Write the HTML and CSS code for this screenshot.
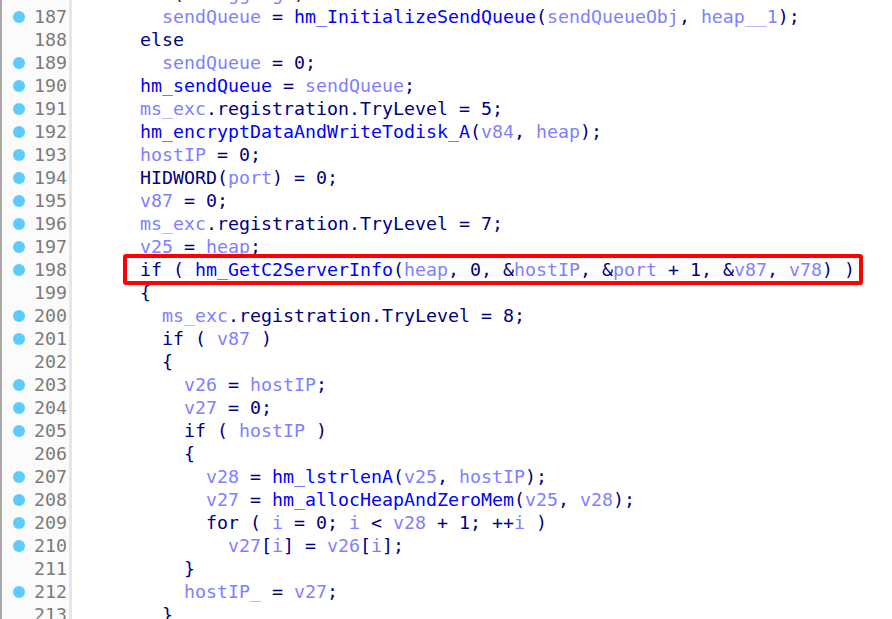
FILE: index.html
```html
<!DOCTYPE html>
<html>
<head>
<meta charset="utf-8">
<link rel="stylesheet" href="styles.css">
</head>
<body>
<div class="listing">
  <div class="row"><div class="gutter"><span class="dot"></span><span class="num">186</span></div><div class="code">      <span class="k">if</span> <span class="k">(</span> <span class="v">bLogging</span> <span class="k">)</span></div></div>
  <div class="row"><div class="gutter"><span class="dot"></span><span class="num">187</span></div><div class="code">        <span class="v">sendQueue</span> <span class="k">=</span> <span class="f">hm_InitializeSendQueue</span><span class="k">(</span><span class="v">sendQueueObj</span><span class="k">,</span> <span class="v">heap__1</span><span class="k">);</span></div></div>
  <div class="row"><div class="gutter"><span class="nodot"></span><span class="num">188</span></div><div class="code">      <span class="k">else</span></div></div>
  <div class="row"><div class="gutter"><span class="dot"></span><span class="num">189</span></div><div class="code">        <span class="v">sendQueue</span> <span class="k">= 0;</span></div></div>
  <div class="row"><div class="gutter"><span class="dot"></span><span class="num">190</span></div><div class="code">      <span class="f">hm_sendQueue</span> <span class="k">=</span> <span class="v">sendQueue</span><span class="k">;</span></div></div>
  <div class="row"><div class="gutter"><span class="dot"></span><span class="num">191</span></div><div class="code">      <span class="v">ms_exc</span><span class="k">.registration.TryLevel = 5;</span></div></div>
  <div class="row"><div class="gutter"><span class="dot"></span><span class="num">192</span></div><div class="code">      <span class="f">hm_encryptDataAndWriteTodisk_A</span><span class="k">(</span><span class="v">v84</span><span class="k">,</span> <span class="v">heap</span><span class="k">);</span></div></div>
  <div class="row"><div class="gutter"><span class="dot"></span><span class="num">193</span></div><div class="code">      <span class="v">hostIP</span> <span class="k">= 0;</span></div></div>
  <div class="row"><div class="gutter"><span class="dot"></span><span class="num">194</span></div><div class="code">      <span class="k">HIDWORD(</span><span class="v">port</span><span class="k">) = 0;</span></div></div>
  <div class="row"><div class="gutter"><span class="dot"></span><span class="num">195</span></div><div class="code">      <span class="v">v87</span> <span class="k">= 0;</span></div></div>
  <div class="row"><div class="gutter"><span class="dot"></span><span class="num">196</span></div><div class="code">      <span class="v">ms_exc</span><span class="k">.registration.TryLevel = 7;</span></div></div>
  <div class="row"><div class="gutter"><span class="dot"></span><span class="num">197</span></div><div class="code">      <span class="v">v25</span> <span class="k">=</span> <span class="v">heap</span><span class="k">;</span></div></div>
  <div class="row"><div class="gutter"><span class="dot"></span><span class="num">198</span></div><div class="code">      <span class="mark"><span class="k">if</span> <span class="k">(</span> <span class="f">hm_GetC2ServerInfo</span><span class="k">(</span><span class="v">heap</span><span class="k">, 0, &amp;</span><span class="v">hostIP</span><span class="k">, &amp;</span><span class="v">port</span><span class="k"> + 1, &amp;</span><span class="v">v87</span><span class="k">,</span> <span class="v">v78</span><span class="k">) )</span></span></div></div>
  <div class="row"><div class="gutter"><span class="nodot"></span><span class="num">199</span></div><div class="code">      <span class="k">{</span></div></div>
  <div class="row"><div class="gutter"><span class="dot"></span><span class="num">200</span></div><div class="code">        <span class="v">ms_exc</span><span class="k">.registration.TryLevel = 8;</span></div></div>
  <div class="row"><div class="gutter"><span class="dot"></span><span class="num">201</span></div><div class="code">        <span class="k">if</span> <span class="k">(</span> <span class="v">v87</span> <span class="k">)</span></div></div>
  <div class="row"><div class="gutter"><span class="nodot"></span><span class="num">202</span></div><div class="code">        <span class="k">{</span></div></div>
  <div class="row"><div class="gutter"><span class="dot"></span><span class="num">203</span></div><div class="code">          <span class="v">v26</span> <span class="k">=</span> <span class="v">hostIP</span><span class="k">;</span></div></div>
  <div class="row"><div class="gutter"><span class="dot"></span><span class="num">204</span></div><div class="code">          <span class="v">v27</span> <span class="k">= 0;</span></div></div>
  <div class="row"><div class="gutter"><span class="dot"></span><span class="num">205</span></div><div class="code">          <span class="k">if</span> <span class="k">(</span> <span class="v">hostIP</span> <span class="k">)</span></div></div>
  <div class="row"><div class="gutter"><span class="nodot"></span><span class="num">206</span></div><div class="code">          <span class="k">{</span></div></div>
  <div class="row"><div class="gutter"><span class="dot"></span><span class="num">207</span></div><div class="code">            <span class="v">v28</span> <span class="k">=</span> <span class="f">hm_lstrlenA</span><span class="k">(</span><span class="v">v25</span><span class="k">,</span> <span class="v">hostIP</span><span class="k">);</span></div></div>
  <div class="row"><div class="gutter"><span class="dot"></span><span class="num">208</span></div><div class="code">            <span class="v">v27</span> <span class="k">=</span> <span class="f">hm_allocHeapAndZeroMem</span><span class="k">(</span><span class="v">v25</span><span class="k">,</span> <span class="v">v28</span><span class="k">);</span></div></div>
  <div class="row"><div class="gutter"><span class="dot"></span><span class="num">209</span></div><div class="code">            <span class="k">for</span> <span class="k">(</span> <span class="v">i</span> <span class="k">= 0;</span> <span class="v">i</span> <span class="k">&lt;</span> <span class="v">v28</span> <span class="k">+ 1; ++</span><span class="v">i</span> <span class="k">)</span></div></div>
  <div class="row"><div class="gutter"><span class="dot"></span><span class="num">210</span></div><div class="code">              <span class="v">v27</span><span class="k">[</span><span class="v">i</span><span class="k">] =</span> <span class="v">v26</span><span class="k">[</span><span class="v">i</span><span class="k">];</span></div></div>
  <div class="row"><div class="gutter"><span class="nodot"></span><span class="num">211</span></div><div class="code">          <span class="k">}</span></div></div>
  <div class="row"><div class="gutter"><span class="dot"></span><span class="num">212</span></div><div class="code">          <span class="v">hostIP_</span> <span class="k">=</span> <span class="v">v27</span><span class="k">;</span></div></div>
  <div class="row"><div class="gutter"><span class="nodot"></span><span class="num">213</span></div><div class="code">        <span class="k">}</span></div></div>
</div>
</body>
</html>
```

FILE: styles.css
```css
html, body {
  margin: 0;
  padding: 0;
  background: #ffffff;
  width: 892px;
  height: 619px;
  overflow: hidden;
}

.listing {
  margin-top: -18px;
  font-family: "DejaVu Sans Mono", "Liberation Mono", monospace;
  font-size: 18.27px;
  line-height: 23px;
}

.row {
  display: flex;
  height: 23px;
}

.gutter {
  display: flex;
  align-items: center;
  width: 67px;
  flex: none;
  border-left: 2px solid #a9a9a9;
  border-right: 3px solid #e6e6e6;
  background: #fbfbfb;
}

.dot, .nodot {
  width: 12px;
  height: 12px;
  margin-left: 11px;
  border-radius: 50%;
  flex: none;
}

.dot {
  background: #5ccbff;
}

.num {
  margin-left: auto;
  padding-right: 2px;
  color: #7b7b7b;
}

.code {
  white-space: pre;
  padding-left: 2px;
  color: #000080;
}

.k { color: #000080; }
.f { color: #0000ff; }
.v { color: #8080ff; }

.mark {
  position: relative;
}

.mark::after {
  content: "";
  position: absolute;
  left: -17px;
  right: -8px;
  top: -5px;
  bottom: -5px;
  border: 4px solid #ff0000;
  border-radius: 3px;
  pointer-events: none;
}
```
